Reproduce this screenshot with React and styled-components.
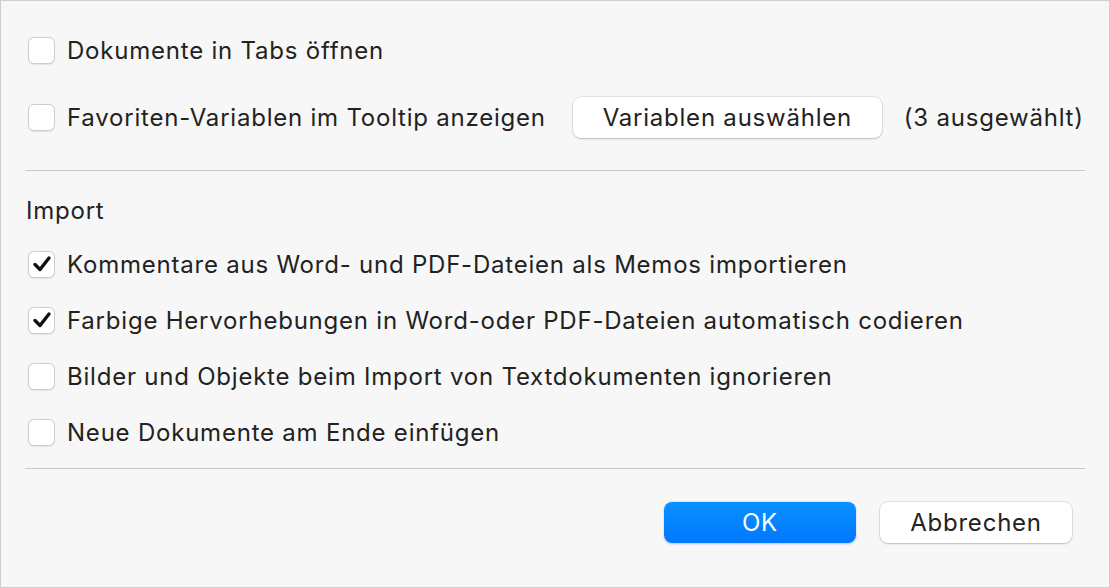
import React from "react";
import styled, { createGlobalStyle } from "styled-components";

const GlobalStyle = createGlobalStyle`
  html, body {
    margin: 0;
    padding: 0;
    background: #f6f6f6;
  }
  * {
    box-sizing: border-box;
  }
`;

const Window = styled.div`
  width: 1110px;
  height: 588px;
  border: 1px solid #cfcfcf;
  background: #f7f7f7;
  padding: 27px 24px 0 24px;
  display: flex;
  flex-direction: column;
  font-family: Inter, "Noto Sans", "Liberation Sans", sans-serif;
  font-size: 24px;
  letter-spacing: 0.78px;
  color: #222222;
`;

const Row = styled.div`
  height: 44px;
  display: flex;
  align-items: center;
  margin-top: ${({ $top }) => $top || 0}px;
`;

const Box = styled.span`
  width: 27px;
  height: 27px;
  margin-left: 3px;
  margin-right: 12px;
  border-radius: 6px;
  border: 1px solid #cdcdcd;
  background: #ffffff;
  box-shadow: 0 0.5px 1px rgba(0, 0, 0, 0.08);
  display: flex;
  align-items: center;
  justify-content: center;
  flex-shrink: 0;
`;

const Label = styled.span`
  white-space: nowrap;
`;

const Divider = styled.div`
  height: 1px;
  background: #c9c9c9;
  margin-top: ${({ $top }) => $top}px;
`;

const Heading = styled.div`
  height: 30px;
  line-height: 30px;
  margin-top: 25px;
  padding-left: 1px;
`;

const List = styled.div`
  display: flex;
  flex-direction: column;
  gap: 12px;
  margin-top: 16px;
`;

const PushButton = styled.button`
  height: 41px;
  border-radius: 8px;
  border: none;
  font-family: inherit;
  font-size: 24px;
  letter-spacing: inherit;
  padding: 0;
  flex-shrink: 0;
  width: ${({ $width }) => $width}px;
  margin-left: ${({ $gap }) => $gap || 0}px;
  color: ${({ $primary }) => ($primary ? "#ffffff" : "#222222")};
  background: ${({ $primary }) =>
    $primary ? "linear-gradient(#0a90ff, #0078ff)" : "#ffffff"};
  box-shadow: ${({ $primary }) =>
    $primary
      ? "0 0.5px 2px rgba(0, 100, 255, 0.35)"
      : "0 0 0 0.5px rgba(0, 0, 0, 0.14), 0 1px 2px rgba(0, 0, 0, 0.18)"};
`;

const Side = styled.span`
  margin-left: 22px;
  white-space: nowrap;
`;

const Footer = styled.div`
  display: flex;
  justify-content: flex-end;
  gap: 24px;
  margin-top: 33px;
  padding-right: 13px;
`;

const Check = () => (
  <svg width="20" height="18" viewBox="0 0 20 18">
    <path
      d="M3 9.5 L8 14.5 L17 3"
      fill="none"
      stroke="#111"
      strokeWidth="3.4"
      strokeLinecap="round"
      strokeLinejoin="round"
    />
  </svg>
);

const Option = ({ checked, children, top }) => (
  <Row $top={top}>
    <Box>{checked && <Check />}</Box>
    {children}
  </Row>
);

const importOptions = [
  { label: "Kommentare aus Word- und PDF-Dateien als Memos importieren", checked: true },
  { label: "Farbige Hervorhebungen in Word-oder PDF-Dateien automatisch codieren", checked: true },
  { label: "Bilder und Objekte beim Import von Textdokumenten ignorieren", checked: false },
  { label: "Neue Dokumente am Ende einfügen", checked: false },
];

export default function App() {
  return (
    <>
      <GlobalStyle />
      <Window>
        <Option>
          <Label>Dokumente in Tabs öffnen</Label>
        </Option>
        <Option top={23}>
          <Label>Favoriten-Variablen im Tooltip anzeigen</Label>
          <PushButton $width={309} $gap={27}>
            Variablen auswählen
          </PushButton>
          <Side>(3 ausgewählt)</Side>
        </Option>
        <Divider $top={31} />
        <Heading>Import</Heading>
        <List>
          {importOptions.map((o) => (
            <Option key={o.label} checked={o.checked}>
              <Label>{o.label}</Label>
            </Option>
          ))}
        </List>
        <Divider $top={14} />
        <Footer>
          <PushButton $primary $width={192}>OK</PushButton>
          <PushButton $width={192}>Abbrechen</PushButton>
        </Footer>
      </Window>
    </>
  );
}
